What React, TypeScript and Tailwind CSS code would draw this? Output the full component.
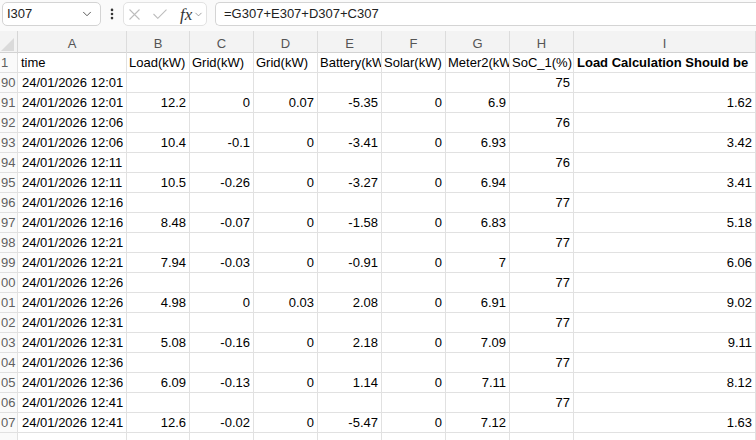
import { ChevronDown, EllipsisVertical } from "lucide-react";

const cols = ["A", "B", "C", "D", "E", "F", "G", "H", "I"];
const headers = ["time", "Load(kW)", "Grid(kW)", "Grid(kW)", "Battery(kW)", "Solar(kW)", "Meter2(kW)", "SoC_1(%)"];

type Row = { n: string; t: string; v?: (string | number)[]; soc?: number };

// odd rows carry readings, even rows only the SoC value
const rows: Row[] = [
  { n: "90", t: "12:01", soc: 75 },
  { n: "91", t: "12:01", v: [12.2, 0, 0.07, -5.35, 0, 6.9, "", 1.62] },
  { n: "92", t: "12:06", soc: 76 },
  { n: "93", t: "12:06", v: [10.4, -0.1, 0, -3.41, 0, 6.93, "", 3.42] },
  { n: "94", t: "12:11", soc: 76 },
  { n: "95", t: "12:11", v: [10.5, -0.26, 0, -3.27, 0, 6.94, "", 3.41] },
  { n: "96", t: "12:16", soc: 77 },
  { n: "97", t: "12:16", v: [8.48, -0.07, 0, -1.58, 0, 6.83, "", 5.18] },
  { n: "98", t: "12:21", soc: 77 },
  { n: "99", t: "12:21", v: [7.94, -0.03, 0, -0.91, 0, 7, "", 6.06] },
  { n: "00", t: "12:26", soc: 77 },
  { n: "01", t: "12:26", v: [4.98, 0, 0.03, 2.08, 0, 6.91, "", 9.02] },
  { n: "02", t: "12:31", soc: 77 },
  { n: "03", t: "12:31", v: [5.08, -0.16, 0, 2.18, 0, 7.09, "", 9.11] },
  { n: "04", t: "12:36", soc: 77 },
  { n: "05", t: "12:36", v: [6.09, -0.13, 0, 1.14, 0, 7.11, "", 8.12] },
  { n: "06", t: "12:41", soc: 77 },
  { n: "07", t: "12:41", v: [12.6, -0.02, 0, -5.47, 0, 7.12, "", 1.63] },
];

const grid =
  "grid grid-cols-[18px_109px_63px_64px_64px_64px_64px_64px_64px_182px]";
const cell =
  "h-5 border-r border-b border-[#e1e1e1] overflow-hidden whitespace-nowrap leading-[19px]";

function RowHead({ children }: { children?: React.ReactNode }) {
  return (
    <div className={`${cell} bg-[#fafafa] border-[#dcdcdc] text-[#5f5f5f] pl-[1px]`}>{children}</div>
  );
}

export default function App() {
  return (
    <div className="w-[756px] h-[440px] overflow-hidden bg-white text-[13px] text-black font-['Liberation_Sans',Arial,sans-serif]">
      {/* formula bar */}
      <div className="h-[31px] bg-[#fafafa] flex items-start pt-[2px] pl-[2px]">
        <div className="w-[99px] h-6 bg-white border border-[#d4d4d4] rounded-[5px] flex items-center pl-[4px] pr-[6px] justify-between">
          <span className="text-[#222]">I307</span>
          <ChevronDown className="w-[14px] h-[14px] text-[#444]" strokeWidth={1.5} />
        </div>
        <div className="w-[22px] h-6 flex items-center justify-center">
          <EllipsisVertical className="w-[14px] h-[14px] text-[#333]" strokeWidth={2.5} />
        </div>
        <div className="w-[84px] h-6 bg-white border border-[#e2e2e2] rounded-[5px] flex items-center pl-[5px]">
          <svg width="11" height="11" viewBox="0 0 11 11" className="shrink-0">
            <path d="M0.5 0.5 L10.5 10.5 M10.5 0.5 L0.5 10.5" stroke="#bdbdbd" strokeWidth="1.1" fill="none" />
          </svg>
          <svg width="14" height="10" viewBox="0 0 14 10" className="ml-[13px] shrink-0">
            <path d="M0.5 5 L4.8 9.3 L13.5 0.6" stroke="#bdbdbd" strokeWidth="1.1" fill="none" />
          </svg>
          <span className="ml-[13px] italic text-[17px] text-[#333] font-['Liberation_Serif',serif] leading-none">fx</span>
          <ChevronDown className="ml-[1px] w-[11px] h-[11px] text-[#777]" strokeWidth={1.5} />
        </div>
        <div className="ml-[8px] flex-1 h-6 bg-white border border-[#d4d4d4] border-r-0 rounded-l-[5px] flex items-center pl-[8px] text-[#222]">
          =G307+E307+D307+C307
        </div>
      </div>

      {/* column letters */}
      <div className={`${grid} h-[22px] bg-[#f3f3f3] border-b border-[#d2d2d2] text-[#555]`}>
        <div className="relative border-r border-[#d6d6d6]">
          <div className="absolute right-[3px] bottom-[3px] w-0 h-0 border-l-[13px] border-l-transparent border-b-[13px] border-b-[#dadada]" />
        </div>
        {cols.map((c) => (
          <div key={c} className="border-r border-[#dcdcdc] flex items-center justify-center pt-[3px]">
            {c}
          </div>
        ))}
      </div>

      {/* sheet */}
      <div className={grid}>
        <RowHead>1</RowHead>
        {headers.map((h, i) => (
          <div key={i} className={`${cell} ${i === 0 ? "pl-[3px]" : "pl-[2px]"}`}>
            {h}
          </div>
        ))}
        <div className={`${cell} pl-[3px] font-bold`}>Load Calculation Should be</div>

        {rows.map((r) => {
          const vals = r.v ?? ["", "", "", "", "", "", r.soc ?? "", ""];
          return (
            <div key={r.n} className="contents">
              <RowHead>{r.n}</RowHead>
              <div className={`${cell} pl-[4px]`}>24/01/2026 {r.t}</div>
              {vals.map((v, i) => (
                <div key={i} className={`${cell} text-right pr-[3px]`}>
                  {v}
                </div>
              ))}
            </div>
          );
        })}
        <RowHead />
        {cols.map((c) => (
          <div key={c} className={cell} />
        ))}
      </div>
    </div>
  );
}
